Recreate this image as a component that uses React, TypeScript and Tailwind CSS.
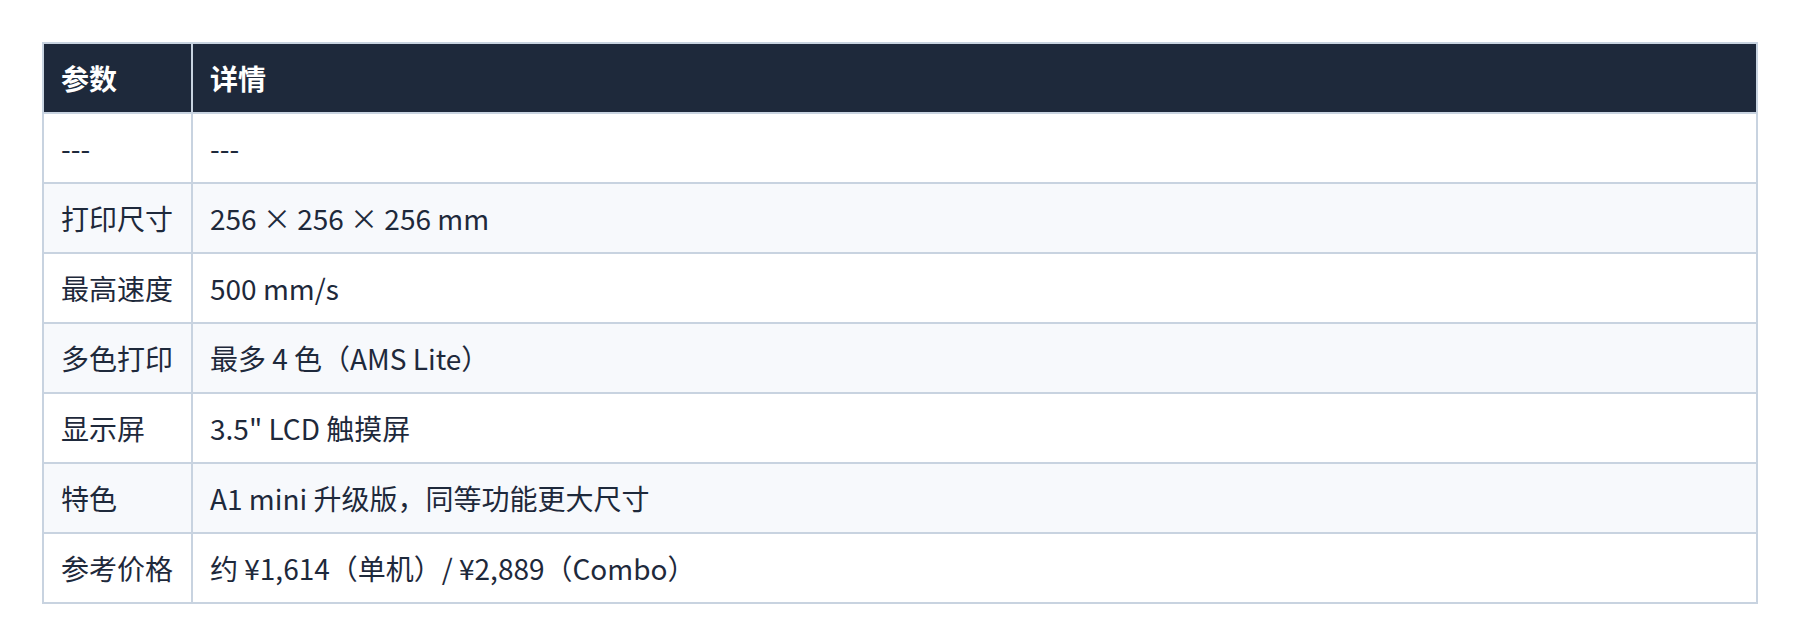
import React from 'react';

const rows: [string, string][] = [
  ['---', '---'],
  ['打印尺寸', '256 × 256 × 256 mm'],
  ['最高速度', '500 mm/s'],
  ['多色打印', '最多 4 色（AMS Lite）'],
  ['显示屏', '3.5" LCD 触摸屏'],
  ['特色', 'A1 mini 升级版，同等功能更大尺寸'],
  ['参考价格', '约 ¥1,614（单机）/ ¥2,889（Combo）'],
];

export default function App() {
  return (
    <div
      className="min-h-screen bg-white p-[42px] text-[#1e293b]"
      style={{ fontFamily: '"Noto Sans CJK SC", "Noto Sans", sans-serif' }}
    >
      <table className="w-full border-collapse border-2 border-[#c8d3e0] text-[28px] leading-[36px]">
        <thead>
          <tr className="bg-[#1e293b] text-white">
            <th className="border-2 border-[#c8d3e0] pl-[17px] pr-[18px] py-4 text-left font-bold whitespace-nowrap">参数</th>
            <th className="border-2 border-[#c8d3e0] pl-[17px] pr-[18px] py-4 text-left font-bold">详情</th>
          </tr>
        </thead>
        <tbody>
          {rows.map(([k, v], i) => (
            <tr key={i} className={i % 2 === 1 ? 'bg-[#f7f9fc]' : 'bg-white'}>
              <td className="border-2 border-[#c8d3e0] pl-[17px] pr-[18px] py-4 whitespace-nowrap">{k}</td>
              <td className="w-full border-2 border-[#c8d3e0] pl-[17px] pr-[18px] py-4">{v}</td>
            </tr>
          ))}
        </tbody>
      </table>
    </div>
  );
}
